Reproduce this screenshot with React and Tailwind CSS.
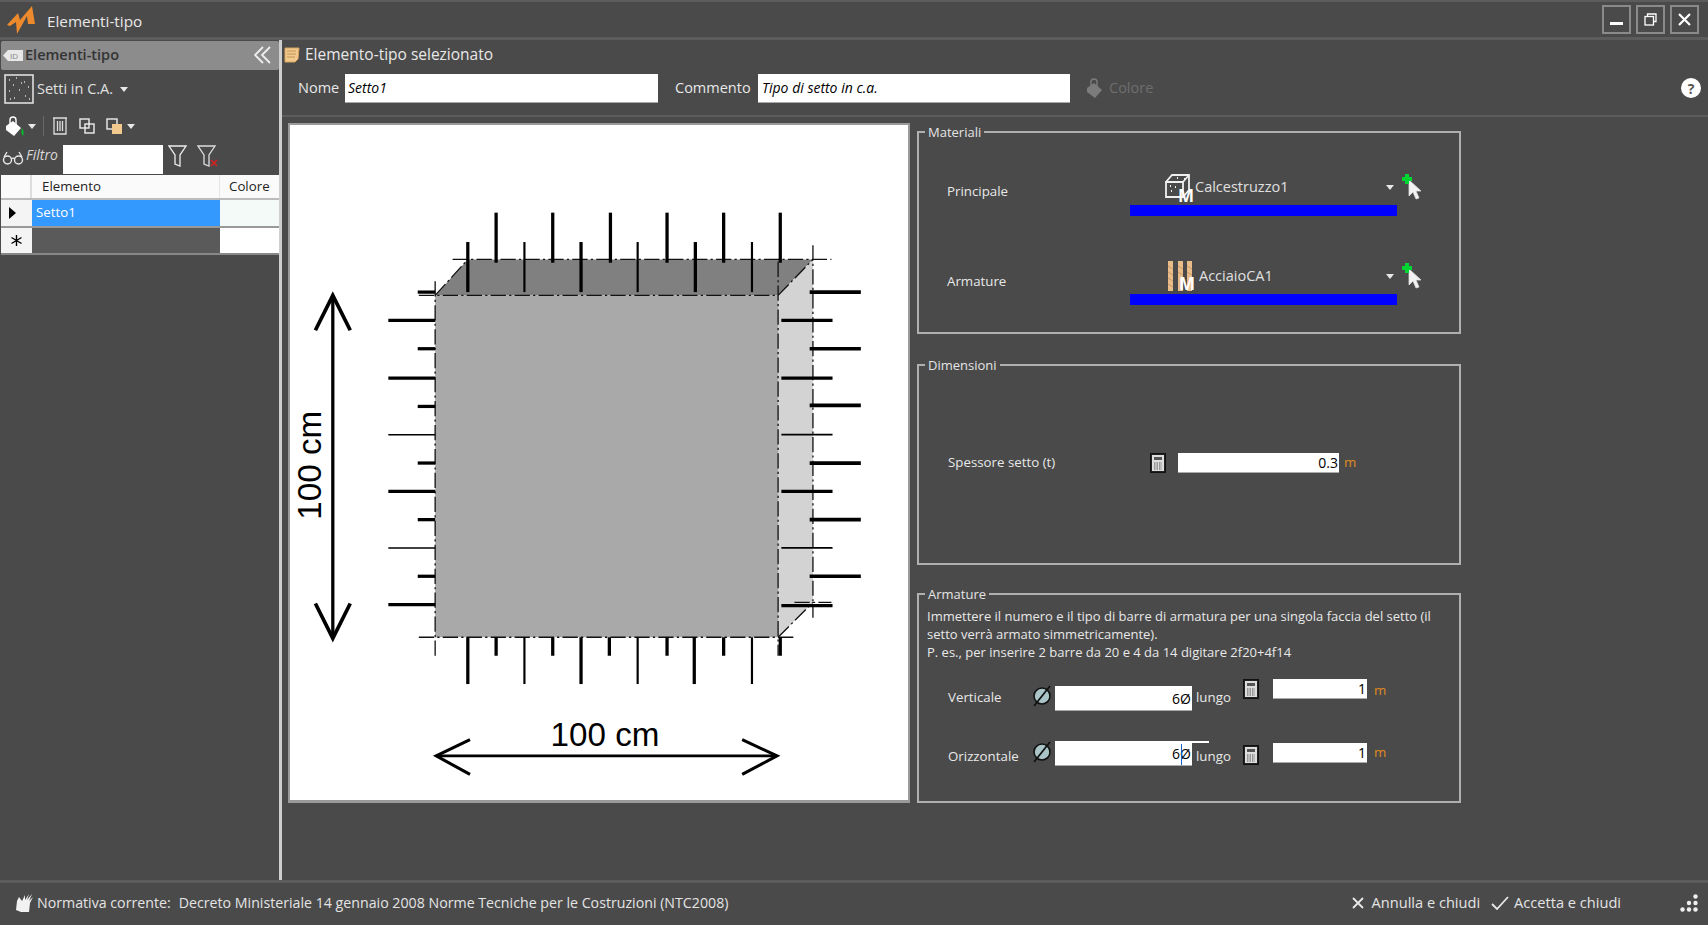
import React from "react";

const FONT = "font-['Open_Sans',sans-serif]";

const Caret = ({ className = "" }) => (
  <svg width="8" height="5" viewBox="0 0 8 5" className={className}>
    <path d="M0 0h8L4 5z" fill="#e8e8e8" />
  </svg>
);

const Logo = () => (
  <svg width="30" height="30" viewBox="6 4 30 30">
    <path d="M7 24 18 12l2 7L32 5l3 18h-7l-1-8-10 18-1-12-6 4z" fill="#ec8a2c" />
  </svg>
);

const Note = () => (
  <svg width="16" height="16" viewBox="0 0 16 16">
    <path d="M1 1h14l-1 11-3 3H1z" fill="#f1c98e" stroke="#d9a35f" />
    <path d="M3 4h9M3 7h9M3 10h8" stroke="#bf9255" />
  </svg>
);

const Calc = () => (
  <svg width="16" height="20" viewBox="0 0 16 20">
    <rect x="0.5" y="0.5" width="15" height="19" fill="#222" stroke="#111" />
    <rect x="2" y="2" width="12" height="16" fill="#ddd" />
    <rect x="4" y="4" width="8" height="3" fill="#555" />
    <path d="M4 10h8M4 12h8M4 14h8M4 16h8" stroke="#555" strokeDasharray="1.5 1" />
  </svg>
);

const Diameter = () => (
  <svg width="20" height="22" viewBox="0 0 20 22">
    <circle cx="10" cy="11" r="8" fill="#a9c5c8" stroke="#111" strokeWidth="1.6" />
    <path d="M2 21 18 1" stroke="#111" strokeWidth="1.8" />
  </svg>
);

const CursorAdd = () => (
  <svg width="22" height="26" viewBox="0 0 22 26">
    <path d="M7 6l12 11h-5l3 7-3 1-3-7-4 4z" fill="#f2f2f2" stroke="#dcdcdc" strokeWidth="0.8" />
    <path d="M3 0h4v3h3v4H7v3H3V7H0V3h3z" fill="#00d632" />
  </svg>
);

const Bucket = ({ fill = "#fff", drip = false }) => (
  <svg width="22" height="21" viewBox="0 0 22 21">
    <path d="M2 10 9 5l8 7-7 8-8-6z" fill={fill} />
    <path d="M6 8V4a3 3 0 0 1 6 0v5" fill="none" stroke={fill} strokeWidth="1.4" />
    {drip && <path d="M18 12c2 3 2 6 1 8-2-2-2-5-1-8z" fill="#00b82e" />}
  </svg>
);

const Bar = ({ x1, y1, x2, y2, w = 3 }) => (
  <line x1={x1} y1={y1} x2={x2} y2={y2} stroke="#000" strokeWidth={w} />
);

const Dash = ({ d }) => (
  <path d={d} fill="none" stroke="#111" strokeWidth="1.2" strokeDasharray="14 3 2 3" />
);

const Diagram = () => {
  const topLong = [456, 508, 561, 613, 665, 717];
  const topShort = [430, 482, 534, 586, 639, 691];
  const leftBars = [
    [384, 268, 3], [357, 294, 3], [384, 320, 3], [357, 347, 3], [384, 373, 3], [357, 399, 1.5],
    [384, 425, 3], [357, 451, 3], [384, 477, 3], [357, 503, 1.5], [384, 529, 3], [357, 555, 3],
  ];
  const rightBars = [
    [744, 791, 268, 3.4], [718, 765, 294, 3], [744, 791, 320, 3.4], [718, 765, 347, 3], [744, 791, 372, 3.4], [718, 765, 399, 1.6],
    [744, 791, 425, 3.4], [718, 765, 451, 3], [744, 791, 477, 3.4], [718, 765, 503, 1.6], [744, 791, 529, 3.4], [718, 765, 556, 3],
  ];
  return (
    <svg viewBox="267 114.500 567 620" className="w-full h-full block">
      <polygon points="400,271 430,238 747,238 715,271" fill="#808080" />
      <polygon points="715,271 747,238 747,553 715,585" fill="#d3d3d3" />
      <rect x="400" y="271" width="315" height="314" fill="#a9a9a9" />

      <Dash d="M416 238H764" />
      <Dash d="M385 271H715" />
      <Dash d="M385 585H730" />
      <Dash d="M400 258V602" />
      <Dash d="M715 240V602" />
      <Dash d="M747 225V567" />
      <Dash d="M730 553H764" />
      <Dash d="M400 271 430 238" />
      <Dash d="M715 271 747 238" />
      <Dash d="M715 585 747 553" />

      {topLong.map((x) => (
        <Bar key={x} x1={x} y1={195} x2={x} y2={241} />
      ))}
      {topShort.map((x, i) => (
        <Bar key={x} x1={x} y1={222} x2={x} y2={268} w={i % 2 ? 2 : 3} />
      ))}
      {leftBars.map(([x, y, w]) => (
        <Bar key={y} x1={x} y1={y} x2={400} y2={y} w={w} />
      ))}
      {rightBars.map(([a, b, y, w]) => (
        <Bar key={y} x1={a} y1={y} x2={b} y2={y} w={w} />
      ))}
      {[430, 482, 534, 586, 638, 691].map((x, i) => (
        <Bar key={x} x1={x} y1={585} x2={x} y2={628} w={i % 2 ? 2 : 3} />
      ))}
      {[456, 508, 560, 613, 665, 717].map((x) => (
        <Bar key={x} x1={x} y1={585} x2={x} y2={602} />
      ))}

      <Bar x1={306} y1={272} x2={306} y2={585} w={3} />
      <path d="M290 303 306 271l16 32M290 554l16 32 16-32" fill="none" stroke="#000" strokeWidth="3.4" />
      <Bar x1={401} y1={694} x2={714} y2={694} w={2.4} />
      <path d="M432 679 401 694l31 17M682 679l32 15-32 17" fill="none" stroke="#000" strokeWidth="2.8" />

      <text x="556" y="685" textAnchor="middle" fontSize="30.5" fontFamily="'Liberation Sans',sans-serif" fill="#000">
        100 cm
      </text>
      <text
        x="0"
        y="0"
        transform="translate(295 427) rotate(-90)"
        textAnchor="middle"
        fontSize="30.5"
        fontFamily="'Liberation Sans',sans-serif"
        fill="#000"
      >
        100 cm
      </text>
    </svg>
  );
};

const Box = ({ title, className = "", children }) => (
  <fieldset className={`border-2 border-[#b0b0b0] min-w-0 ${className}`}>
    <legend className="ml-[6px] px-[3px] text-[13px] leading-[18px] text-[#e4e4e4]">{title}</legend>
    {children}
  </fieldset>
);

const Combo = ({ label, icon, name, className = "", labelClass = "mt-[7px]", nameClass = "ml-0" }) => (
  <div className={`flex items-start ${className}`}>
    <span className={`w-[211px] pl-[28px] text-[13.3px] leading-[18px] text-[#e8e8e8] ${labelClass}`}>{label}</span>
    <div className="w-[267px]">
      <div className="h-[30px] pb-[6px] flex items-center">
        <div className="ml-[33px] w-[30px] flex justify-center">{icon}</div>
        <span className={`text-[14.5px] text-[#e0e0e0] ${nameClass}`}>{name}</span>
        <Caret className="ml-auto mr-[3px]" />
      </div>
      <div className="h-[11px] bg-[#0000ff]" />
    </div>
    <div className="ml-[5px] -mt-[1px]">
      <CursorAdd />
    </div>
  </div>
);

const Cube = () => (
  <div className="relative w-[26px] h-[26px]">
    <svg width="26" height="24" viewBox="0 0 26 24" fill="none" stroke="#f0f0f0" strokeWidth="1.8">
      <path d="M1 8h17v15H1zM1 8l6-7h17v15l-6 7M18 8l6-7" />
      <path d="M5 12h1M10 13h1M6 17h1M12 4h1M19 5h1" strokeWidth="1.8" />
    </svg>
    <span className="absolute right-[-3px] bottom-[-4px] text-[17px] leading-[17px] font-bold text-white">M</span>
  </div>
);

const Rebars = () => (
  <div className="relative left-[2px] w-[26px] h-[30px]">
    <svg width="26" height="30" viewBox="0 0 26 30">
      <rect x="1" width="5" height="30" fill="#e8bd88" />
      <rect x="11" width="5" height="30" fill="#e8bd88" />
      <rect x="20" width="5" height="30" fill="#e8bd88" />
      <path d="M1 5l5 3M1 11l5 3M1 17l5 3M1 23l5 3M11 5l5 3M11 11l5 3M20 5l5 3M20 11l5 3" stroke="#c79a66" />
    </svg>
    <span className="absolute right-[-2px] bottom-[-1px] text-[17px] leading-[17px] font-bold text-white">M</span>
  </div>
);

const TextInput = ({ className = "", children }) => (
  <div className={`bg-white border-b border-[#aaa] flex items-center text-[14px] text-black ${className}`}>{children}</div>
);

export default function App() {
  return (
    <div className={`w-[1708px] h-[925px] flex flex-col bg-[#4a4a4a] text-[#e8e8e8] overflow-hidden ${FONT}`}>
      {/* title bar */}
      <div className="h-[40px] shrink-0 flex items-center border-t-2 border-b-[3px] border-[#5c5c5c] pl-[6px] pr-[9px]">
        <Logo />
        <span className="ml-[11px] mt-[3px] text-[15.3px]">Elementi-tipo</span>
        <div className="ml-auto flex gap-[5px]">
          <button className="w-[29px] h-[29px] border-2 border-[#8a8a8a] flex items-center justify-center">
            <span className="w-[13px] h-[3px] bg-white mt-[8px]" />
          </button>
          <button className="w-[29px] h-[29px] border-2 border-[#8a8a8a] flex items-center justify-center">
            <svg width="13" height="13" viewBox="0 0 13 13" fill="none" stroke="#fff" strokeWidth="1.3">
              <path d="M3.5 3V1h8.5v7.5H10" />
              <rect x="1" y="3.5" width="8.5" height="8.5" />
            </svg>
          </button>
          <button className="w-[29px] h-[29px] border-2 border-[#8a8a8a] flex items-center justify-center">
            <svg width="13" height="13" viewBox="0 0 13 13" stroke="#fff" strokeWidth="2.2">
              <path d="M1 1l11 11M12 1 1 12" />
            </svg>
          </button>
        </div>
      </div>

      <div className="flex-1 flex min-h-0">
        {/* left pane */}
        <div className="w-[279px] shrink-0 pt-px pl-px">
          <div className="h-[29px] pb-px bg-[#8c8c8c] rounded-[2px] flex items-center pl-[2px] pr-[8px]">
            <svg width="20" height="11" viewBox="0 0 20 11">
              <path d="M0 5.5 5 0h15v11H5z" fill="#e8e8e8" />
              <text x="7" y="9" fontSize="8" fill="#888" fontFamily="'Liberation Sans',sans-serif">ID</text>
            </svg>
            <span className="ml-[2px] text-[14.5px] font-semibold text-[#333]">Elementi-tipo</span>
            <svg className="ml-auto" width="17" height="18" viewBox="0 0 17 18" fill="none" stroke="#eee" strokeWidth="1.8">
              <path d="M9 1 1 9l8 8M16 1 8 9l8 8" />
            </svg>
          </div>

          <div className="mt-[4px] ml-[3px] flex items-center h-[30px]">
            <svg width="30" height="30" viewBox="0 0 30 30">
              <rect x="1" y="1" width="28" height="28" fill="none" stroke="#e8e8e8" strokeWidth="1.5" />
              <path d="M5 6h1M12 4h1M20 8h1M9 11h1M24 13h1M5 17h1M15 16h1M21 22h1M10 24h1M25 25h1M17 9h1M6 25h1" stroke="#ddd" strokeWidth="1.5" />
            </svg>
            <span className="ml-[3px] text-[14.5px] text-[#e0e0e0]">Setti in C.A.</span>
            <Caret className="ml-[7px]" />
          </div>

          <div className="mt-[11px] ml-[3px] h-[22px] flex items-center">
            <Bucket drip />
            <Caret className="ml-[2px]" />
            <span className="ml-[7px] w-px h-[20px] bg-[#6a6a6a]" />
            <svg className="ml-[8px]" width="16" height="18" viewBox="0 0 16 18" fill="none" stroke="#ddd" strokeWidth="1.3">
              <path d="M1 1h14M2 1v16h12V1M5.5 4v10M8 4v10M10.500 4v10" />
            </svg>
            <svg className="ml-[11px]" width="16" height="16" viewBox="0 0 16 16" fill="none" stroke="#eee" strokeWidth="1.4">
              <rect x="1" y="1" width="9" height="9" />
              <rect x="6" y="6" width="9" height="9" />
            </svg>
            <svg className="ml-[11px]" width="17" height="17" viewBox="0 0 17 17">
              <rect x="1" y="1" width="10" height="10" fill="none" stroke="#eee" strokeWidth="1.4" />
              <rect x="6" y="6" width="10" height="10" fill="#f1c98e" />
            </svg>
            <Caret className="ml-[4px]" />
          </div>

          <div className="mt-[8px] flex items-start h-[30px]">
            <svg className="ml-[1px] mt-[6px]" width="22" height="14" viewBox="0 0 22 14" fill="none" stroke="#e8e8e8" strokeWidth="1.4">
              <circle cx="5.500" cy="9" r="4" />
              <circle cx="16.500" cy="9" r="4" />
              <path d="M9 8c1-1 3-1 4 0M2 6l3-5M20 6l-3-5" />
            </svg>
            <span className="ml-[2px] -mt-px text-[14px] italic text-[#d8d8d8]">Filtro</span>
            <div className="ml-[5px] w-[100px] h-[29px] bg-white" />
            <svg className="ml-[5px]" width="19" height="22" viewBox="0 0 19 22" fill="none" stroke="#eee" strokeWidth="1.3">
              <path d="M1 1h17l-6 9v11l-5-2v-9z" />
            </svg>
            <svg className="ml-[10px]" width="22" height="23" viewBox="0 0 22 23" fill="none">
              <path d="M1 1h17l-6 9v11l-5-2v-9z" stroke="#ddd" strokeWidth="1.3" />
              <path d="M14 15l6 6M20 15l-6 6" stroke="#d62020" strokeWidth="1.6" />
            </svg>
          </div>

          {/* grid */}
          <div className="text-[13.3px] text-[#222] leading-none">
            <div className="flex h-[25px] border-b-2 border-[#bbb] bg-[#fafafa]">
              <div className="w-[31px] border-r-2 border-[#ddd]" />
              <div className="w-[188px] pl-[10px] flex items-center border-r border-[#e6e6e6]">Elemento</div>
              <div className="flex-1 pl-[9px] flex items-center">Colore</div>
            </div>
            <div className="flex h-[28px] border-b-2 border-[#999]">
              <div className="w-[31px] bg-[#f4f4f4] pl-[8px] flex items-center">
                <svg width="7" height="12" viewBox="0 0 7 12">
                  <path d="M0 0 7 6 0 12z" fill="#000" />
                </svg>
              </div>
              <div className="w-[188px] bg-[#3399ff] text-white pl-[4px] flex items-center">Setto1</div>
              <div className="flex-1 bg-[#f4faf8]" />
            </div>
            <div className="flex h-[27px] border-b-2 border-[#888]">
              <div className="w-[31px] bg-[#f4f4f4] flex items-center justify-center">
                <svg width="13" height="13" viewBox="0 0 13 13" stroke="#000" strokeWidth="1.4">
                  <path d="M6.500 1v11M1.500 3.500l10 6M11.500 3.500l-10 6" />
                </svg>
              </div>
              <div className="w-[188px] bg-[#5a5a5a]" />
              <div className="flex-1 bg-white" />
            </div>
          </div>
        </div>

        <div className="w-[3px] shrink-0 bg-[#cfcfcf]" />

        {/* right pane */}
        <div className="flex-1 min-w-0 flex flex-col">
          <div className="h-[31px] pl-[2px] pb-px flex items-center">
            <Note />
            <span className="ml-[5px] text-[15.5px]">Elemento-tipo selezionato</span>
          </div>
          <div className="h-[46px] flex items-start pt-[3px] border-b-2 border-[#5c5c5c] text-[14.5px]">
            <span className="ml-[16px] w-[47px] leading-[27px]">Nome</span>
            <TextInput className="w-[313px] h-[29px] pl-[3px] pb-[2px] italic text-[14.7px]">Setto1</TextInput>
            <span className="ml-[17px] w-[83px] leading-[27px]">Commento</span>
            <TextInput className="w-[312px] h-[29px] pl-[4px] pb-[2px] italic text-[14.7px]">Tipo di setto in c.a.</TextInput>
            <div className="ml-[15px] mt-[4px]">
              <Bucket fill="#7c7c7c" />
            </div>
            <span className="ml-[2px] leading-[27px] text-[#6e6e6e]">Colore</span>
            <span className="ml-auto mr-[7px] mt-[4px] w-[20px] h-[20px] rounded-full bg-white flex items-center justify-center text-[14px] font-bold text-[#555]">?</span>
          </div>

          <div className="flex pl-[6px] pt-[6px] gap-[7px]">
            <div className="w-[622px] h-[680px] border-2 border-b-[3px] border-[#9a9a9a] bg-white">
              <Diagram />
            </div>

            <div className="w-[544px] flex flex-col text-[13.3px]">
              <Box title="Materiali" className="h-[211px]">
                <Combo label="Principale" name="Calcestruzzo1" icon={<Cube />} nameClass="ml-[2px]" className="mt-[34px]" />
                <Combo
                  label="Armature"
                  name="AcciaioCA1"
                  icon={<Rebars />}
                  className="mt-[48px]"
                  labelClass="mt-[8px]"
                  nameClass="ml-[6px]"
                />
              </Box>

              <Box title="Dimensioni" className="h-[209px] mt-[22px]">
                <div className="flex items-center mt-[79px] h-[20px]">
                  <span className="w-[231px] pl-[29px]">Spessore setto (t)</span>
                  <Calc />
                  <TextInput className="ml-[12px] w-[161px] h-[20px] justify-end pr-[1px]">0.3</TextInput>
                  <span className="ml-[5px] text-[#e08a1e]">m</span>
                </div>
              </Box>

              <Box title="Armature" className="h-[218px] mt-[20px]">
                <p className="px-[8px] text-[13px] leading-[18px] text-[#e8e8e8] mt-[4px]">
                  Immettere il numero e il tipo di barre di armatura per una singola faccia del setto (il setto verrà armato simmetricamente).
                  <br />
                  P. es., per inserire 2 barre da 20 e 4 da 14 digitare 2f20+4f14
                </p>
                <div className="flex items-start mt-[24px] h-[32px]">
                  <span className="w-[113px] pl-[29px] mt-[3px]">Verticale</span>
                  <Diameter />
                  <TextInput className="ml-[3px] w-[137px] h-[25px] justify-end pr-[1px] mt-px">6Ø</TextInput>
                  <span className="ml-[4px] mt-[3px]">lungo</span>
                  <div className="ml-[12px] -mt-[6px]"><Calc /></div>
                  <TextInput className="ml-[14px] w-[94px] h-[20px] justify-end pr-[1px] -mt-[6px]">1</TextInput>
                  <span className="ml-[7px] -mt-[4px] text-[#e08a1e]">m</span>
                </div>
                <div className="flex items-start mt-[25px] h-[32px]">
                  <span className="w-[113px] pl-[29px] mt-[5px]">Orizzontale</span>
                  <div className="-mt-[1px]"><Diameter /></div>
                  <div className="ml-[3px] relative -mt-[1px]">
                    <TextInput className="w-[137px] h-[25px] justify-end pr-[1px]">6Ø</TextInput>
                    <div className="absolute left-[137px] top-0 w-[17px] h-[2px] bg-white" />
                    <div className="absolute right-[10px] top-[3px] w-px h-[21px] bg-[#1060d0]" />
                  </div>
                  <span className="ml-[4px] mt-[5px]">lungo</span>
                  <div className="ml-[12px] mt-[3px]"><Calc /></div>
                  <TextInput className="ml-[14px] w-[94px] h-[20px] justify-end pr-[1px] mt-[1px]">1</TextInput>
                  <span className="ml-[7px] mt-[1px] text-[#e08a1e]">m</span>
                </div>
              </Box>
            </div>
          </div>
        </div>
      </div>

      {/* status bar */}
      <div className="h-[45px] shrink-0 border-t-[3px] border-[#5c5c5c] flex items-center pl-[14px] pr-[10px] pb-[3px] text-[14.2px] text-[#e4e4e4]">
        <svg width="20" height="20" viewBox="0 0 20 20">
          <path d="M3 8 2 17l5 2h8l1-9 3-6-4 4 3-7-5 6 2-6-4 6V2L8 8 5 4z" fill="#f2f2f2" />
        </svg>
        <span className="ml-[3px]">Normativa corrente:</span>
        <span className="ml-[8px]">Decreto Ministeriale 14 gennaio 2008 Norme Tecniche per le Costruzioni (NTC2008)</span>
        <svg className="ml-auto" width="12" height="12" viewBox="0 0 12 12" stroke="#e8e8e8" strokeWidth="1.8">
          <path d="M1 1l10 10M11 1 1 11" />
        </svg>
        <span className="ml-[8px] text-[14.6px]">Annulla e chiudi</span>
        <svg className="ml-[11px]" width="18" height="14" viewBox="0 0 18 14" fill="none" stroke="#e8e8e8" strokeWidth="1.8">
          <path d="M1 8l5 5L17 1" />
        </svg>
        <span className="ml-[5px] text-[14.6px]">Accetta e chiudi</span>
        <svg className="ml-[59px]" width="18" height="18" viewBox="0 0 18 18" fill="#f0f0f0">
          <circle cx="15.500" cy="2.500" r="2.200" />
          <circle cx="9" cy="9" r="2.200" />
          <circle cx="15.500" cy="9" r="2.200" />
          <circle cx="2.500" cy="15.500" r="2.200" />
          <circle cx="9" cy="15.500" r="2.200" />
          <circle cx="15.500" cy="15.500" r="2.200" />
        </svg>
      </div>
    </div>
  );
}
